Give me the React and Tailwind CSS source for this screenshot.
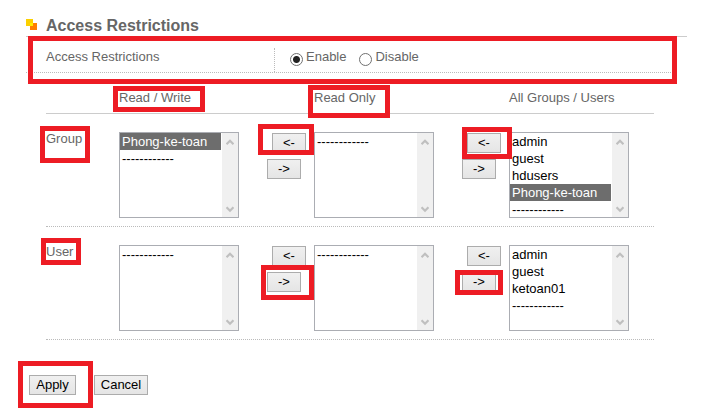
import React from "react";

const DASHES = "------------";

const rows = [
  {
    label: "Group",
    labelMark: "-left-[6px] -top-[6px] w-[50px] h-[37px]",
    lists: [
      { name: "Read / Write", items: ["Phong-ke-toan", DASHES], selected: ["Phong-ke-toan"] },
      { name: "Read Only", items: [DASHES], selected: [] },
      {
        name: "All Groups / Users",
        items: ["admin", "guest", "hdusers", "Phong-ke-toan", DASHES],
        selected: ["Phong-ke-toan"],
      },
    ],
    moveMarks: [
      "-left-[9px] -top-[8px] w-[56px] h-[31px]",
      "left-0 -top-[5px] w-[50px] h-[32px]",
    ],
  },
  {
    label: "User",
    labelMark: "-left-[5px] -top-[7px] w-[40px] h-[27px]",
    lists: [
      { name: "Read / Write", items: [DASHES], selected: [] },
      { name: "Read Only", items: [DASHES], selected: [] },
      { name: "All Groups / Users", items: ["admin", "guest", "ketoan01", DASHES], selected: [] },
    ],
    moveMarks: [
      "-left-[6px] top-[20px] w-[53px] h-[35px]",
      "-left-[7px] top-[25px] w-[48px] h-[25px]",
    ],
  },
];

function Mark({ className }) {
  return (
    <span
      aria-hidden="true"
      className={`pointer-events-none absolute z-10 border-[5px] border-[#ed1c24] ${className}`}
    />
  );
}

function Chevron({ down }) {
  return (
    <svg viewBox="0 0 8 7" className="h-[7px] w-2" aria-hidden="true">
      <path
        d={down ? "M0.5 1.2 L4 4.7 L7.5 1.2" : "M0.5 5.3 L4 1.8 L7.5 5.3"}
        fill="none"
        stroke="#bfbfbf"
        strokeWidth="2.2"
      />
    </svg>
  );
}

function ListBox({ label, items, selected }) {
  return (
    <div className="flex h-[86px] w-[120px] shrink-0 border border-[#abadb3] bg-white">
      <select
        multiple
        size={5}
        aria-label={label}
        defaultValue={selected}
        className="h-[84px] min-w-0 flex-1 appearance-none overflow-hidden border-0 bg-white p-0 text-[13px] leading-4 text-black outline-none [scrollbar-width:none]"
      >
        {items.map((item) => (
          <option
            key={item}
            value={item}
            className="h-[17px] min-h-0 p-0 pt-px pl-[2px] leading-4 checked:bg-[linear-gradient(#6d6d6d,#6d6d6d)] checked:[-webkit-text-fill-color:#fff]"
          >
            {item}
          </option>
        ))}
      </select>
      <div className="ml-px flex w-4 flex-col items-center justify-between bg-[#f0f0f0] pt-[6px] pb-[4px]">
        <Chevron />
        <Chevron down />
      </div>
    </div>
  );
}

function Button({ children, className = "", ...rest }) {
  return (
    <button
      type="button"
      className={`h-5 border border-[#acacac] bg-linear-to-b from-[#f0f0f0] to-[#e5e5e5] text-[13px] leading-4 text-black ${className}`}
      {...rest}
    >
      {children}
    </button>
  );
}

function MoveButtons({ mark }) {
  return (
    <div className="relative flex w-[39px] flex-col gap-[6px] pt-px">
      <Button className="w-[34px] self-end" aria-label="Move left">
        &lt;-
      </Button>
      <Button className="w-[34px] self-start" aria-label="Move right">
        -&gt;
      </Button>
      <Mark className={mark} />
    </div>
  );
}

function Radio({ label, ...rest }) {
  return (
    <label className="flex items-start gap-[3px]">
      <input
        type="radio"
        name="access"
        className="mt-1 h-[13px] w-[13px] appearance-none rounded-full border border-[#707070] bg-white checked:bg-[radial-gradient(circle,#222_3px,transparent_4px)]"
        {...rest}
      />
      {label}
    </label>
  );
}

const columns = "grid grid-cols-[73px_1fr_1fr_145px]";

export default function App() {
  return (
    <main className="bg-white pt-[17px] pr-[22px] pb-[14px] pl-[26px] font-['Liberation_Sans',Arial,sans-serif] text-[13px] leading-4 text-[#666]">
      <header className="flex h-5 items-start gap-[9px] border-b border-[#ccc]">
        <svg viewBox="0 0 11 11" className="mt-[2px] h-[11px] w-[11px]" aria-hidden="true">
          <rect width="7" height="7" fill="#fbd000" />
          <rect x="4" y="4" width="7" height="7" fill="#ff7f00" />
          <rect x="4" y="4" width="3" height="3" fill="#ffee00" />
        </svg>
        <h1 className="text-[16px] leading-[18px] font-bold">Access Restrictions</h1>
      </header>

      <form>
        <div
          role="radiogroup"
          aria-labelledby="access-label"
          className="relative mr-[10px] flex border-b border-dotted border-[#bbb] pt-[11px] pl-5"
        >
          <span id="access-label" className="w-[228px] pt-px">
            Access Restrictions
          </span>
          <div className="flex h-6 gap-[13px] border-l border-dotted border-[#bbb] pt-px pl-[15px]">
            <Radio label="Enable" defaultChecked />
            <Radio label="Disable" />
          </div>
          <Mark className="-top-px left-[2px] right-0 h-[48px]" />
        </div>

        <section className="mr-[33px] ml-5">
          <div className={`${columns} border-b border-[#ccc] pt-[17px] pb-[7px]`}>
            <span className="relative col-start-2">
              Read / Write
              <Mark className="-top-[4px] -left-[6px] h-[26px] w-[92px]" />
            </span>
            <span className="relative">
              Read Only
              <Mark className="-top-[5px] -left-[6px] h-[33px] w-[82px]" />
            </span>
            <span>All Groups / Users</span>
          </div>

          {rows.map((row) => (
            <div
              key={row.label}
              className={`${columns} border-b border-dotted border-[#bbb] pt-[18px] pb-2`}
            >
              <span className="relative leading-[14px]">
                {row.label}
                <Mark className={row.labelMark} />
              </span>
              {row.lists.map((list, i) => (
                <div key={list.name} className="flex justify-between pr-2">
                  <ListBox
                    label={`${row.label}: ${list.name}`}
                    items={list.items}
                    selected={list.selected}
                  />
                  {i < 2 && <MoveButtons mark={row.moveMarks[i]} />}
                </div>
              ))}
            </div>
          ))}
        </section>

        <div className="flex gap-[18px] pt-[35px] pl-[3px]">
          <div className="relative">
            <Button className="w-[47px]">Apply</Button>
            <Mark className="-top-[14px] -left-[11px] h-[47px] w-[75px]" />
          </div>
          <Button className="w-[54px]">Cancel</Button>
        </div>
      </form>
    </main>
  );
}
